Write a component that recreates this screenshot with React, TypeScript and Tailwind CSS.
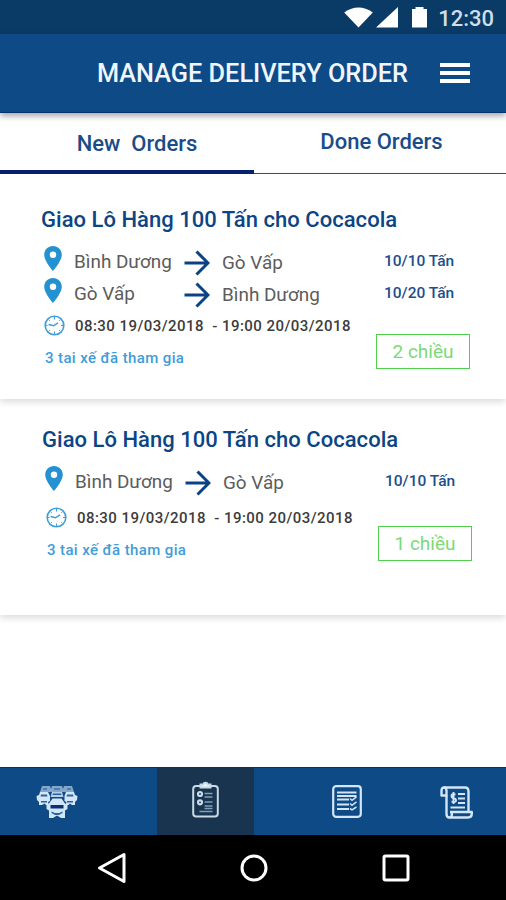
import { useState } from "react";

type Route = { from: string; to: string; weight: string };

type Order = {
  id: number;
  title: string;
  routes: Route[];
  time: string;
  drivers: string;
  way: string;
  cardClass: string;
  timeClass: string;
};

const orders: Order[] = [
  {
    id: 1,
    title: "Giao Lô Hàng 100 Tấn cho Cocacola",
    routes: [
      { from: "Bình Dương", to: "Gò Vấp", weight: "10/10 Tấn" },
      { from: "Gò Vấp", to: "Bình Dương", weight: "10/20 Tấn" },
    ],
    time: "08:30 19/03/2018  - 19:00 20/03/2018",
    drivers: "3 tai xế đã tham gia",
    way: "2 chiều",
    cardClass: "z-[2] h-[225px] pt-[30px] pl-[41px] pr-9",
    timeClass: "",
  },
  {
    id: 2,
    title: "Giao Lô Hàng 100 Tấn cho Cocacola",
    routes: [{ from: "Bình Dương", to: "Gò Vấp", weight: "10/10 Tấn" }],
    time: "08:30 19/03/2018  - 19:00 20/03/2018",
    drivers: "3 tai xế đã tham gia",
    way: "1 chiều",
    cardClass: "z-[1] h-[216px] pt-[25px] pl-[42px] pr-[34px]",
    timeClass: "mt-1 pl-px",
  },
];

function PinIcon() {
  return (
    <svg width="18" height="25" viewBox="0 0 18 25" className="mb-[7px]">
      <path
        d="M9 0C4 0 .2 3.8.2 8.7.2 15 9 25 9 25s8.800-10 8.800-16.300C17.800 3.800 14 0 9 0Zm0 12a3.200 3.200 0 1 1 0-6.400A3.200 3.200 0 0 1 9 12Z"
        fill="#2492d1"
      />
    </svg>
  );
}

function ArrowIcon() {
  return (
    <svg width="26" height="26" viewBox="0 0 26 26" fill="none" stroke="#0b4285" strokeWidth="3" className="mt-px">
      <path d="M.5 13H24M12.500 1.500 24 13 12.500 24.500" />
    </svg>
  );
}

function ClockIcon() {
  return (
    <svg width="21" height="21" viewBox="0 0 21 21" fill="none" stroke="#3f9dda" className="-mt-px">
      <circle cx="10.500" cy="10.500" r="9.300" strokeWidth="1.600" />
      <path d="M4.500 9.500l5 1.300 4.500-3" strokeWidth="1.500" />
      <path d="M10.500 2v2.500M10.500 16.500V19M2 10.500h1.500M17 10.500h2M4.800 4.800l1 1M15.200 15.200l1 1M16.200 4.800l-1 1M4.800 16.200l1-1" strokeWidth="1" />
    </svg>
  );
}

function TrucksIcon() {
  return (
    <svg width="42" height="36" viewBox="0 0 42 36" fill="#d3e6f7">
      {/* back row */}
      <path d="M6 2h8l1 3 1-3h10l1 3 1-3h8l2 6H4Z" opacity=".6" />
      <path d="M7 4h4v2H7ZM18 4h6v2h-6ZM31 4h4v2h-4Z" fill="#4b80b5" />
      {/* side trucks */}
      <path d="M4 8h8l2 4v5l-2 1 1 3h-3l-1.500-1.500L6 21H3v-3l-2-2-.5-4L3 11Z" />
      <path d="M30 8h8l1 3 2.500 1-.5 4-2 2v3h-3l-2-1.500L32.500 21h-3l1-3-2-1v-5Z" />
      <path d="M16 8h10l1.500 5h-13Z" opacity=".85" />
      <path d="M5 10.500h6l.5 2h-7ZM31 10.500h6l.5 2h-7ZM17 9.500h8l.5 1.500h-9ZM5 17h6v1.500H5ZM31 17h6v1.500h-6Z" fill="#2a64a0" />
      {/* front truck */}
      <path d="M16.500 14.500h9l3.500 5 2.500 1v4.500L29 26.500V34h-4l-4-2.500L17 34h-4v-7.500L10.500 25v-4.500l2.500-1Z" />
      <path d="M14.500 21h13v3.500h-13Z" fill="#082f78" />
      <path d="M15.500 27.500l3.500 1.500h4l3.500-1.500v1.500L23 31h-4l-3.500-2Z" fill="#2a64a0" />
    </svg>
  );
}

function ClipboardIcon() {
  return (
    <svg width="27" height="38" viewBox="0 0 27 38" fill="none" stroke="#c9d9e6">
      <rect x="1.200" y="6" width="24.600" height="30.500" rx="3" strokeWidth="2" />
      <path d="M8.500 7.500V4.500h2.700a2.400 2.400 0 0 1 4.600 0h2.700v3Z" fill="#eef6fc" strokeWidth="2" />
      <path d="M12.500 13.500h8M12.500 17h8M12.500 22h8M12.500 26h8M12.500 28.500h8M7.500 31.500h13" stroke="#7fa0b8" strokeWidth="1.300" />
      <circle cx="8" cy="14" r="2" strokeWidth="2.200" />
      <circle cx="8" cy="22.300" r="2" strokeWidth="2.200" />
    </svg>
  );
}

function ListIcon() {
  return (
    <svg width="30" height="33" viewBox="0 0 30 33" fill="none" stroke="#d3e5f6">
      <rect x="1.200" y="1.200" width="27.600" height="30.600" rx="3" strokeWidth="2.200" />
      <path d="M5 7.500h19.500M5 11h19.500M5 14.500h12M5 19.500h12M5 24h12" strokeWidth="1.800" />
      <path d="M18 13.500l2 1.800 4.500-3.500M18 18.500l2 1.800 4.500-3.500M18 23.500l2 1.300 4.500-2.800" strokeWidth="1.500" />
    </svg>
  );
}

function InvoiceIcon() {
  return (
    <svg width="33" height="33" viewBox="0 0 33 33" fill="none" stroke="#d3e5f6" strokeWidth="2.400" strokeLinejoin="round" className="mt-0.5">
      <path d="M4 1.500h21q3.500 0 3.500 4V25M6.500 9.500V28q0 3.500 3 3.500" />
      <path d="M6.500 9.500H1.500V5q0-3.500 2.500-3.500T6.500 5Z" />
      <path d="M10 26h21.800v1.500q0 4-3.800 4H9.500q2.300 0 2.300-2.500V26" />
      <path d="M18 8h7M18 12.500h7M18 17h7M10.500 21.500H25" strokeWidth="2" />
      <path d="M15.500 8.500q-4-1.500-4 1.300 0 2 2 2.300 2.500.4 2.500 2.300 0 2.500-4.500 1.200M13.500 6v12" strokeWidth="1.900" />
    </svg>
  );
}

function StatusBar() {
  return (
    <div className="flex h-[34px] shrink-0 items-center justify-end bg-[#0a3a66] pr-3 text-white">
      <svg width="29" height="21" viewBox="0 0 29 21" fill="currentColor">
        <path d="M14.500 20.500.2 5.500Q14.500-4.500 28.800 5.500Z" />
      </svg>
      <svg width="22" height="21" viewBox="0 0 22 21" fill="currentColor" className="ml-[3px]">
        <path d="M22 0v20.500H0Z" />
      </svg>
      <svg width="15" height="21" viewBox="0 0 15 21" fill="currentColor" className="ml-[14px]">
        <path d="M0 2h3.500V0h8v2H15v18.500H0Z" />
      </svg>
      <span className="ml-[11px] pt-1 text-[22px] leading-none font-medium text-[#d0deea]">12:30</span>
    </div>
  );
}

function OrderCard({ order }: { order: Order }) {
  return (
    <div className={`shrink-0 bg-white shadow-[0_3px_7px_rgba(0,0,0,0.14)] ${order.cardClass}`}>
      <h2 className="text-[22px] leading-8 font-medium tracking-[0.030px] whitespace-nowrap text-[#0c4584]">
        {order.title}
      </h2>
      <div className="mt-2.5">
        {order.routes.map((route) => (
          <div
            key={route.from}
            className="grid h-8 grid-cols-[29px_111px_37px_162px_1fr] items-center pl-[3px] text-[18.900px] text-[#5c5c5c]"
          >
            <PinIcon />
            <span className="pl-px whitespace-nowrap">{route.from}</span>
            <ArrowIcon />
            <span className="pt-0.5 pl-px whitespace-nowrap">{route.to}</span>
            <span className="pl-px text-[15.500px] font-medium whitespace-nowrap text-[#1d4f8a]">{route.weight}</span>
          </div>
        ))}
      </div>
      <div className={`flex justify-between ${order.timeClass}`}>
        <div className="pl-[3px]">
          <div className="flex h-8 items-center">
            <ClockIcon />
            <span className="ml-2.5 text-[15px] font-medium tracking-[0.450px] whitespace-pre text-[#3c3c3c]">
              {order.time}
            </span>
          </div>
          <p className="pl-px text-[15px] leading-8 font-medium tracking-[0.380px] text-[#3f9dda]">
            {order.drivers}
          </p>
        </div>
        <span className="mt-6 flex h-[35px] w-[94px] items-center justify-center border-[1.500px] border-[#4fcf4a] pt-0.5 text-[19px] text-[#7bd977]">
          {order.way}
        </span>
      </div>
    </div>
  );
}

export default function App() {
  const [tab, setTab] = useState("new");

  return (
    <div className="flex h-[900px] w-[506px] flex-col overflow-hidden bg-white font-['Roboto',sans-serif]">
      <StatusBar />
      <header className="z-10 flex h-[79px] shrink-0 items-center justify-end border-b border-[#06326f] bg-[#0d4a86] pr-9 shadow-[0_3px_6px_rgba(0,0,0,0.35)]">
        <h1 className="pt-px text-[25.300px] font-medium whitespace-nowrap text-[#f0f6fc]">MANAGE DELIVERY ORDER</h1>
        <button className="ml-8 flex w-[30px] flex-col gap-1">
          <span className="h-1 bg-white" />
          <span className="h-1 bg-white" />
          <span className="h-1 bg-white" />
        </button>
      </header>

      <div className="z-[5] flex h-[61px] shrink-0 text-[22px] font-medium text-[#1a4c87]">
        <button
          onClick={() => setTab("new")}
          className={`flex w-[254px] items-center justify-center border-[#06206f] pt-[3px] pl-5 whitespace-pre ${
            tab === "new" ? "border-b-4" : "border-b"
          }`}
        >
          {"New  Orders"}
        </button>
        <button
          onClick={() => setTab("done")}
          className={`flex flex-1 items-center justify-center border-[#2a4d85] pb-[3px] pl-[3px] ${
            tab === "done" ? "border-b-4" : "border-b-[1.500px]"
          }`}
        >
          Done Orders
        </button>
      </div>

      <main className="flex flex-1 flex-col">
        {orders.map((order) => (
          <OrderCard key={order.id} order={order} />
        ))}
      </main>

      <nav className="flex h-[68px] shrink-0 border-t border-[#06326f] bg-[#0d4a86]">
        <button className="flex w-[157px] items-center pl-9">
          <TrucksIcon />
        </button>
        <button className="flex w-[97px] items-center justify-center bg-[#18344f] pb-1.5">
          <ClipboardIcon />
        </button>
        <button className="flex w-[186px] items-center justify-center">
          <ListIcon />
        </button>
        <button className="flex flex-1 items-center">
          <InvoiceIcon />
        </button>
      </nav>

      <div className="flex h-[65px] shrink-0 items-center justify-between bg-black pr-[96px] pl-[97px]">
        <svg width="29" height="32" viewBox="0 0 29 32" fill="none" stroke="#fff" strokeWidth="3" strokeLinejoin="round">
          <path d="M2.500 16 27 2.500v27Z" />
        </svg>
        <svg width="28" height="28" viewBox="0 0 28 28" fill="none" stroke="#fff" strokeWidth="3">
          <circle cx="14" cy="14" r="12" />
        </svg>
        <svg width="28" height="28" viewBox="0 0 28 28" fill="none" stroke="#fff" strokeWidth="3">
          <rect x="2" y="2" width="24" height="24" rx="1.500" />
        </svg>
      </div>
    </div>
  );
}
